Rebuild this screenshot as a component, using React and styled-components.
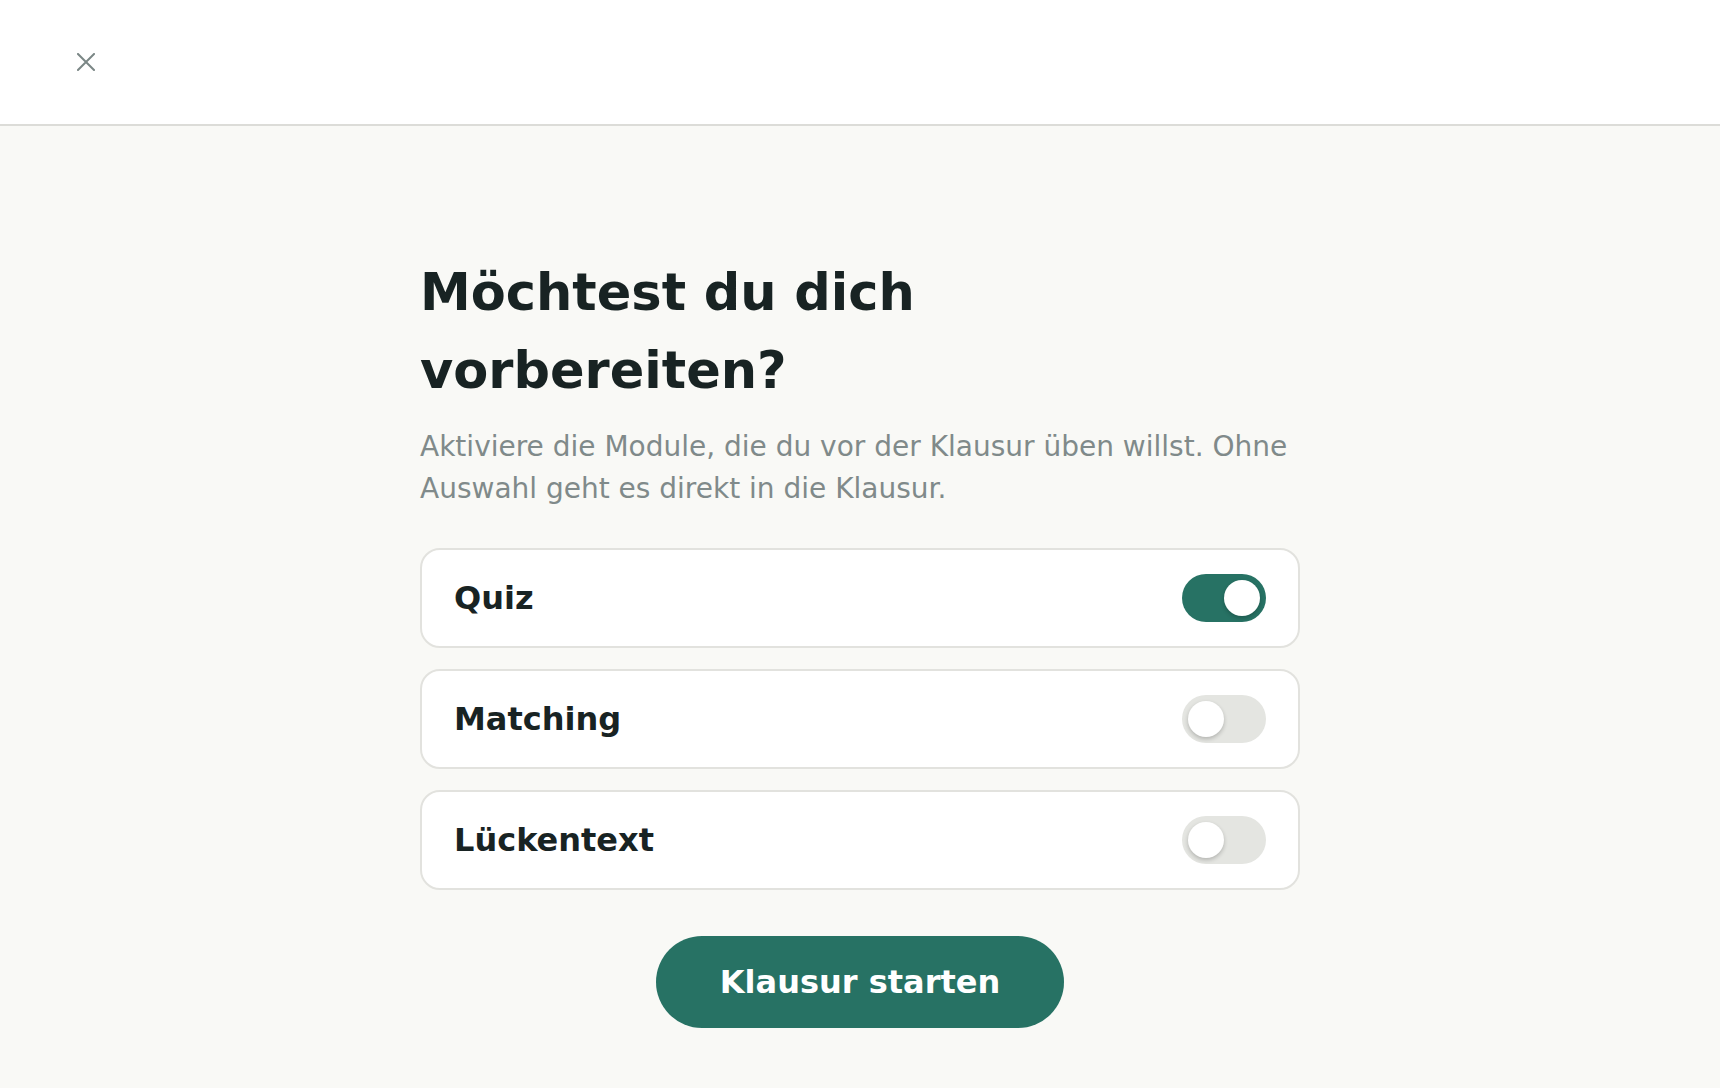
import React, { useState } from "react";
import styled, { createGlobalStyle } from "styled-components";

const GlobalStyle = createGlobalStyle`
  *, *::before, *::after { box-sizing: border-box; }
  html, body {
    margin: 0;
    padding: 0;
    background: #f9f9f6;
    font-family: "DejaVu Sans", "Noto Sans", sans-serif;
    color: #182323;
  }
`;

const Page = styled.div`
  min-height: 100vh;
  display: flex;
  flex-direction: column;
`;

const TopBar = styled.header`
  height: 126px;
  background: #ffffff;
  border-bottom: 2px solid #dcdcd8;
  display: flex;
  align-items: center;
  padding-left: 77px;
`;

const CloseButton = styled.button`
  width: 18px;
  height: 18px;
  padding: 0;
  border: none;
  background: none;
  color: #7b8786;
  cursor: pointer;
  display: flex;
  svg { display: block; }
`;

const Main = styled.main`
  flex: 1;
  display: flex;
  justify-content: center;
  padding: 128px 20px 60px;
`;

const Column = styled.div`
  width: 880px;
  display: flex;
  flex-direction: column;
`;

const Title = styled.h1`
  margin: 0;
  font-size: 51px;
  line-height: 78px;
  font-weight: 700;
  color: #182323;
  max-width: 620px;
`;

const Lead = styled.p`
  margin: 16px 0 0;
  font-size: 28px;
  line-height: 42px;
  color: #808a8a;
`;

const ModuleList = styled.ul`
  list-style: none;
  margin: 38px 0 0;
  padding: 0;
  display: flex;
  flex-direction: column;
  gap: 21px;
`;

const ModuleCard = styled.li`
  height: 100px;
  background: #ffffff;
  border: 2px solid #e2e2de;
  border-radius: 20px;
  padding: 0 32px;
  display: flex;
  align-items: center;
  justify-content: space-between;
`;

const ModuleName = styled.span`
  font-size: 32px;
  font-weight: 700;
  color: #182323;
`;

const Switch = styled.button`
  position: relative;
  width: 84px;
  height: 48px;
  border: none;
  padding: 0;
  border-radius: 24px;
  background: ${(p) => (p.$on ? "#277264" : "#e4e5e1")};
  cursor: pointer;
  transition: background 0.2s;
`;

const Knob = styled.span`
  position: absolute;
  top: 6px;
  left: ${(p) => (p.$on ? "42px" : "6px")};
  width: 36px;
  height: 36px;
  border-radius: 50%;
  background: #ffffff;
  box-shadow: 0 2px 4px rgba(0, 0, 0, 0.22);
  transition: left 0.2s;
`;

const StartButton = styled.button`
  align-self: center;
  margin-top: 46px;
  height: 92px;
  width: 408px;
  border: none;
  border-radius: 46px;
  background: #277264;
  color: #ffffff;
  font-family: inherit;
  font-size: 32px;
  font-weight: 700;
  cursor: pointer;
`;

const CloseIcon = () => (
  <svg width="18" height="18" viewBox="0 0 18 18" fill="none">
    <path d="M1 1L17 17M17 1L1 17" stroke="currentColor" strokeWidth="2" strokeLinecap="square" />
  </svg>
);

const initialModules = [
  { id: "quiz", name: "Quiz", on: true },
  { id: "matching", name: "Matching", on: false },
  { id: "cloze", name: "Lückentext", on: false },
];

export default function App() {
  const [modules, setModules] = useState(initialModules);

  const toggle = (id) =>
    setModules((list) => list.map((m) => (m.id === id ? { ...m, on: !m.on } : m)));

  return (
    <Page>
      <GlobalStyle />
      <TopBar>
        <CloseButton aria-label="Schließen">
          <CloseIcon />
        </CloseButton>
      </TopBar>
      <Main>
        <Column>
          <Title>Möchtest du dich vorbereiten?</Title>
          <Lead>
            Aktiviere die Module, die du vor der Klausur üben willst. Ohne Auswahl geht es direkt in
            die Klausur.
          </Lead>
          <ModuleList>
            {modules.map((m) => (
              <ModuleCard key={m.id}>
                <ModuleName>{m.name}</ModuleName>
                <Switch
                  role="switch"
                  aria-checked={m.on}
                  aria-label={m.name}
                  $on={m.on}
                  onClick={() => toggle(m.id)}
                >
                  <Knob $on={m.on} />
                </Switch>
              </ModuleCard>
            ))}
          </ModuleList>
          <StartButton>Klausur starten</StartButton>
        </Column>
      </Main>
    </Page>
  );
}
